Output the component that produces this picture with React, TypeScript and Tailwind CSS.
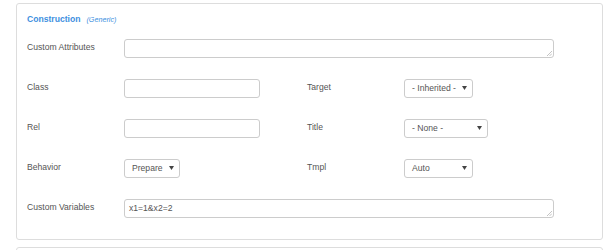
const font = { fontFamily: '"Liberation Sans", Arial, sans-serif' };

function Select({ value, width }: { value: string; width: string }) {
  return (
    <div
      className={`${width} h-[19px] flex items-center justify-between pl-[7px] pr-[5px] border border-[#cccccc] rounded-[3px] bg-white text-[8.6px] text-[#555555]`}
    >
      <span>{value}</span>
      <svg width="5" height="4" viewBox="0 0 5 4" className="shrink-0">
        <path d="M0 0 L5 0 L2.5 4 Z" fill="#444444" />
      </svg>
    </div>
  );
}

function TextBox({ width }: { width: string }) {
  return <div className={`${width} h-[19px] border border-[#cccccc] rounded-[3px] bg-white`} />;
}

function Area({ value }: { value?: string }) {
  return (
    <div className="relative">
      <textarea
        defaultValue={value}
        className="block w-[430px] h-[19px] border border-[#cccccc] rounded-[3px] bg-white px-[4px] py-[2px] text-[8.6px] leading-[12px] text-[#555555] outline-none overflow-hidden resize-none"
        style={font}
      />
      {/* resize grip */}
      <svg width="5" height="5" viewBox="0 0 5 5" className="absolute right-[2px] bottom-[2px]">
        <path d="M5 0 L0 5 M5 2.5 L2.5 5" stroke="#b5b5b5" strokeWidth="0.8" />
      </svg>
    </div>
  );
}

function Label({ children, width = "w-[97px]" }: { children: string; width?: string }) {
  return <div className={`${width} shrink-0 pt-[1px] text-[8.6px] leading-[14px] text-[#555555]`}>{children}</div>;
}

export default function App() {
  return (
    <div className="w-[610px] h-[250px] bg-white overflow-hidden pl-[16px] pt-[3px]" style={font}>
      <div className="w-[587px] h-[237px] border border-[#dddddd] rounded-[3px] pl-[10px] pt-[9px]">
        <div className="flex items-baseline gap-[6px]">
          <span className="text-[8.6px] font-bold text-[#3d8fe0]">Construction</span>
          <span className="text-[7.2px] italic text-[#3d8fe0]">(Generic)</span>
        </div>

        <div className="flex flex-col gap-[21px] mt-[13px]">
          <div className="flex items-start">
            <Label>Custom Attributes</Label>
            <Area />
          </div>

          <div className="flex items-start">
            <Label>Class</Label>
            <TextBox width="w-[136px]" />
            <div className="w-[47px]" />
            <Label>Target</Label>
            <Select value="- Inherited -" width="w-[69px]" />
          </div>

          <div className="flex items-start">
            <Label>Rel</Label>
            <TextBox width="w-[136px]" />
            <div className="w-[47px]" />
            <Label>Title</Label>
            <Select value="- None -" width="w-[84px]" />
          </div>

          <div className="flex items-start">
            <Label>Behavior</Label>
            <Select value="Prepare" width="w-[56px]" />
            <div className="w-[127px]" />
            <Label>Tmpl</Label>
            <Select value="Auto" width="w-[69px]" />
          </div>

          <div className="flex items-start">
            <Label>Custom Variables</Label>
            <Area value="x1=1&x2=2" />
          </div>
        </div>
      </div>

      <div className="w-[587px] h-[20px] mt-[7px] border border-[#dddddd] rounded-t-[3px]" />
    </div>
  );
}
